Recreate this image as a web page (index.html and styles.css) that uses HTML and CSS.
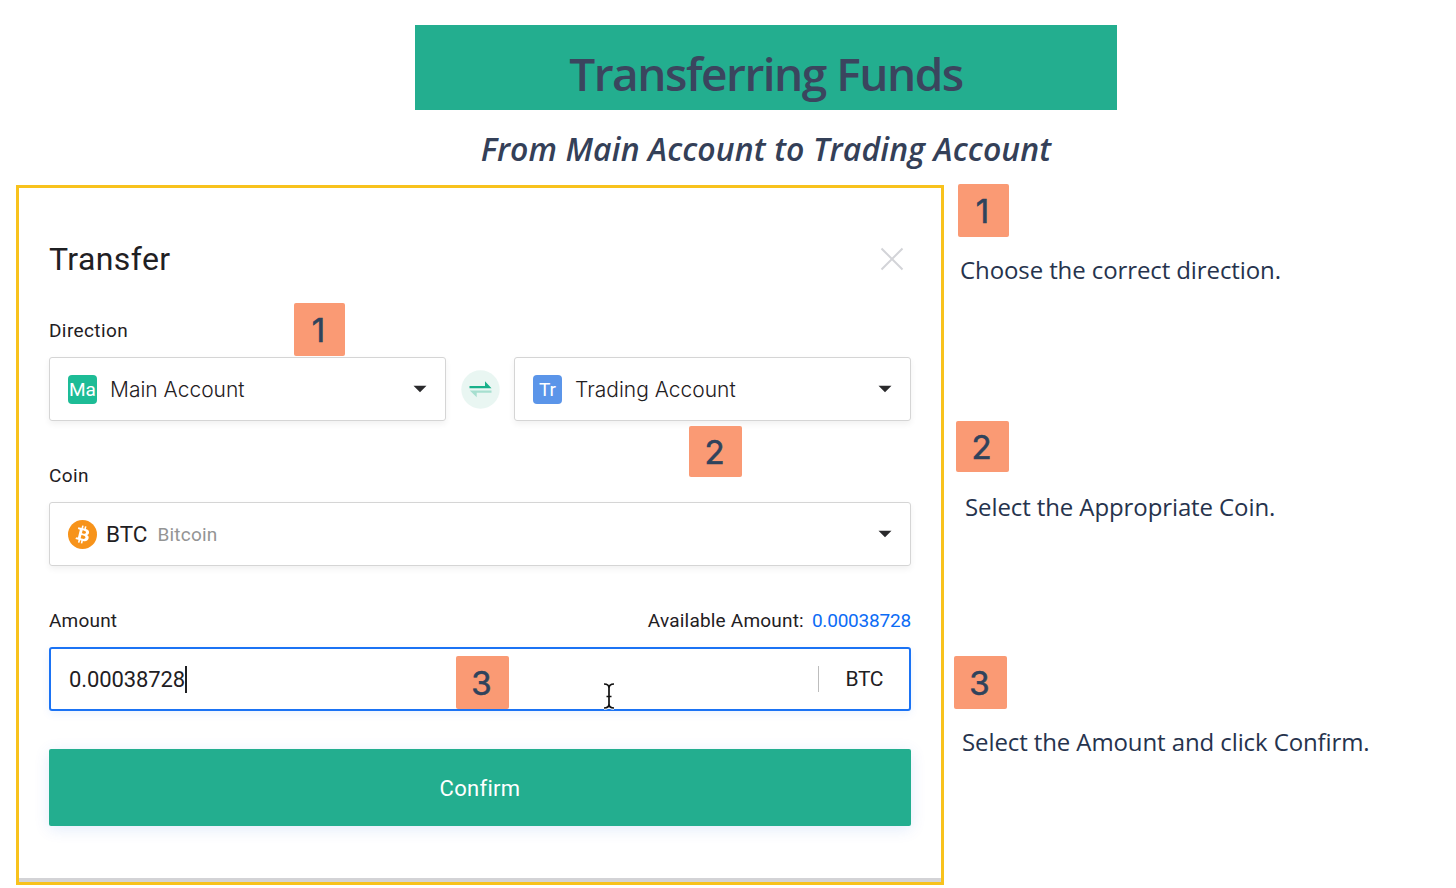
FILE: index.html
```html
<!DOCTYPE html>
<html lang="en">
  <head>
    <meta charset="UTF-8" />
    <meta name="viewport" content="width=device-width, initial-scale=1.0" />
    <title>Transferring Funds</title>
    <link rel="stylesheet" href="styles.css">
  </head>
  <body>
    <header class="page-header">
      <h1 class="banner">Transferring Funds</h1>
      <h2 class="subtitle">From Main Account to Trading Account</h2>
    </header>

    <main class="content">
      <!-- Transfer Form -->
      <form class="panel">
        <div class="panel-head">
          <h3 class="panel-title">Transfer</h3>
          <svg class="close" viewBox="0 0 24 24">
            <path d="M1.5 1.5 22.5 22.5M22.5 1.5 1.5 22.5" />
          </svg>
        </div>

        <div class="label-row"><span class="label-wide">Direction</span></div>
        <div class="direction">
          <div class="field">
            <span class="tag tag-main">Ma</span>
            <span class="account">Main Account</span>
            <svg class="caret" viewBox="0 0 14 8"><path d="M0.5 0.7H13.5L7 7.3Z" /></svg>
          </div>
          <svg class="swap" viewBox="0 0 39 39">
            <circle cx="19.5" cy="19.5" r="19.2" fill="#e9f6f2" />
            <path d="M8.5 16H24V11.3L30.5 18.3H8.5Z" fill="#18b08a" />
            <path d="M30.5 20.5H8.8L15.7 27.2V22.7H30.5Z" fill="#a6dfcf" />
          </svg>
          <div class="field">
            <span class="tag tag-trade">Tr</span>
            <span class="account">Trading Account</span>
            <svg class="caret" viewBox="0 0 14 8"><path d="M0.5 0.7H13.5L7 7.3Z" /></svg>
          </div>
        </div>

        <div class="label-row"><span class="label-wide">Coin</span></div>
        <div class="field">
          <svg class="coin-icon" viewBox="0 0 32 32">
            <circle cx="16" cy="16" r="16" fill="#f7931a" />
            <path fill="#fff" d="M23.189 14.02c.314-2.096-1.283-3.223-3.465-3.975l.708-2.84-1.728-.43-.69 2.765c-.454-.114-.92-.22-1.385-.326l.695-2.783L15.596 6l-.708 2.839c-.376-.086-.746-.17-1.104-.26l.002-.009-2.384-.595-.46 1.846s1.283.294 1.256.312c.7.175.826.638.805 1.006l-.806 3.235c.048.012.11.03.18.057l-.183-.045-1.13 4.532c-.086.212-.303.531-.793.41.018.025-1.256-.313-1.256-.313l-.858 1.978 2.25.561c.418.105.828.215 1.231.318l-.715 2.872 1.727.43.708-2.84c.472.127.93.245 1.378.357l-.706 2.828 1.728.43.715-2.866c2.948.558 5.164.333 6.097-2.333.752-2.146-.037-3.385-1.588-4.192 1.13-.26 1.98-1.003 2.207-2.538zm-3.95 5.538c-.533 2.147-4.148.986-5.32.695l.95-3.805c1.172.293 4.929.872 4.37 3.11zm.535-5.569c-.487 1.953-3.495.96-4.47.717l.86-3.45c.975.243 4.118.696 3.61 2.733z" />
          </svg>
          <span class="coin-code">BTC</span>
          <span class="coin-name">Bitcoin</span>
          <svg class="caret" viewBox="0 0 14 8"><path d="M0.5 0.7H13.5L7 7.3Z" /></svg>
        </div>

        <div class="label-row">
          <span>Amount</span>
          <span class="available">
            <span>Available Amount:</span>
            <span class="available-value">0.00038728</span>
          </span>
        </div>
        <div class="field field-active">
          <span class="amount">0.00038728</span>
          <span class="text-caret"></span>
          <span class="unit">BTC</span>
        </div>

        <button class="confirm" type="button">Confirm</button>

        <!-- Step markers over the form -->
        <span class="badge marker marker-1">1</span>
        <span class="badge badge-wide marker marker-2">2</span>
        <span class="badge badge-square marker marker-3">3</span>
        <svg class="cursor" viewBox="0 0 14 28">
          <path class="cursor-halo" d="M2 2Q7 2 7 6Q7 2 12 2M7 5V23M2 26Q7 26 7 22Q7 26 12 26M4.5 14.5H9.5" />
          <path d="M2 2Q7 2 7 6Q7 2 12 2M7 5V23M2 26Q7 26 7 22Q7 26 12 26M4.5 14.5H9.5" />
        </svg>
      </form>

      <!-- Instructions -->
      <div class="steps">
        <section class="step step-1">
          <span class="badge">1</span>
          <p class="step-text">Choose the correct direction.</p>
        </section>
        <section class="step step-2">
          <span class="badge badge-wide">2</span>
          <p class="step-text">Select the Appropriate Coin.</p>
        </section>
        <section class="step step-3">
          <span class="badge badge-square">3</span>
          <p class="step-text">Select the Amount and click Confirm.</p>
        </section>
      </div>
    </main>
  </body>
</html>
```
FILE: styles.css
```css
* {
  box-sizing: border-box;
}
body {
  margin: 0;
  height: 888px;
  overflow: hidden;
  background-color: #fff;
  color: #1f2023;
  font-family: Roboto, sans-serif;
}
h1,
h2,
h3,
p {
  margin: 0;
}
.page-header {
  width: 702px;
  height: 185px;
  margin-left: 415px;
  padding-top: 25px;
  text-align: center;
  color: #344058;
  font-family: "Trebuchet MS", "Open Sans", sans-serif;
  white-space: nowrap;
}
.banner {
  height: 85px;
  padding-top: 6px;
  background-color: #23ae8f;
  color: #3b455e;
  font-size: 46px;
  font-weight: 600;
  line-height: 85px;
  letter-spacing: -1.5px;
}
.subtitle {
  padding-top: 19px;
  font-size: 32px;
  font-style: italic;
  font-weight: 600;
  line-height: 40px;
  letter-spacing: 0.1px;
}
.content {
  display: flex;
  padding-left: 16px;
}

/* Form */
.panel {
  position: relative;
  width: 928px;
  height: 700px;
  padding: 53px 30px 0;
  border: 3px solid #f8c21c;
  box-shadow: inset 0 -4px 0 #d3d3d6;
}
.panel-head {
  display: flex;
  justify-content: space-between;
  align-items: center;
  height: 36px;
  margin-bottom: -1px;
  padding-right: 7px;
}
.panel-title {
  font-size: 32px;
  font-weight: 400;
  letter-spacing: 0.4px;
}
.close {
  width: 24px;
  height: 24px;
  fill: none;
  stroke: #d3d4d8;
  stroke-width: 2;
}
.label-row {
  display: flex;
  justify-content: space-between;
  height: 24px;
  margin: 43px 0 14px;
  font-size: 19px;
  line-height: 24px;
  letter-spacing: 0.2px;
}
.label-wide {
  letter-spacing: 0.4px;
}
.direction {
  display: grid;
  grid-template-columns: 397px 39px 397px;
  justify-content: space-between;
  align-items: center;
}
.field {
  display: flex;
  align-items: center;
  height: 64px;
  padding: 0 18px;
  border: 1px solid #d5d5d5;
  border-radius: 3px;
  box-shadow: 0 3px 6px rgba(0, 0, 0, 0.06);
}
.tag {
  width: 29px;
  height: 29px;
  overflow: hidden;
  border-radius: 4px;
  color: #fff;
  font-size: 19px;
  line-height: 29px;
  text-align: center;
}
.tag-main {
  background-color: #1dbc96;
}
.tag-trade {
  background-color: #5b95e9;
}
.account {
  margin-left: 13px;
  font-family: Inter, sans-serif;
  font-size: 21px;
  font-weight: 300;
}
.caret {
  width: 14px;
  height: 8px;
  margin-left: auto;
  fill: #2a2a2c;
}
.swap {
  width: 39px;
  height: 39px;
}
.coin-icon {
  width: 29px;
  height: 29px;
}
.coin-code {
  margin-left: 9px;
  font-size: 22.5px;
}
.coin-name {
  margin-left: 10px;
  color: #949494;
  font-size: 19px;
  letter-spacing: 0.2px;
}
.available {
  display: flex;
  gap: 8px;
}
.available-value {
  color: #0c6cf5;
  letter-spacing: -0.2px;
}
.field-active {
  padding: 0 26px 0 18px;
  border: 2px solid #1b73f4;
  box-shadow: 0 3px 8px rgba(12, 108, 245, 0.08);
}
.amount {
  font-size: 22px;
  letter-spacing: -0.1px;
}
.text-caret {
  width: 2px;
  height: 27px;
  background-color: #1f2023;
}
.unit {
  margin-left: auto;
  padding-left: 26px;
  border-left: 1px solid #bdbdbd;
  font-size: 21px;
  line-height: 26px;
  letter-spacing: -0.4px;
}
.confirm {
  display: block;
  width: 100%;
  height: 77px;
  margin-top: 38px;
  padding-top: 3px;
  border: 0;
  border-radius: 2px;
  background-color: #23ae8f;
  box-shadow: 0 3px 16px rgba(12, 90, 220, 0.12);
  color: #fff;
  font-family: inherit;
  font-size: 22px;
  letter-spacing: 0.3px;
}

/* Number badges */
.badge {
  display: block;
  width: 51px;
  height: 53px;
  padding-right: 2px;
  border-radius: 2px;
  background-color: #fa9a74;
  color: #2f435c;
  font-family: Inter, Arial, sans-serif;
  font-size: 33px;
  line-height: 55px;
  text-align: center;
  -webkit-text-stroke: 0.6px #2f435c;
}
.badge-wide {
  width: 53px;
  height: 51px;
  line-height: 53px;
}
.badge-square {
  width: 53px;
}
.marker {
  position: absolute;
}
.marker-1 {
  left: 275px;
  top: 115px;
}
.marker-2 {
  left: 670px;
  top: 238px;
}
.marker-3 {
  left: 437px;
  top: 468px;
}
.cursor {
  position: absolute;
  left: 583px;
  top: 494px;
  width: 14px;
  height: 28px;
  fill: none;
  stroke: #111;
  stroke-width: 1.7;
}
.cursor-halo {
  stroke: #fff;
  stroke-width: 3.5;
}

/* Instructions */
.steps {
  margin-top: -1px;
  color: #26334d;
  font-family: "Trebuchet MS", "Open Sans", sans-serif;
}
.step {
  height: 235px;
  padding-left: 12px;
}
.step-1 {
  height: 237px;
  padding-left: 14px;
}
.step-3 {
  padding-left: 10px;
}
.step-text {
  margin: 17px 0 0 2px;
  font-size: 24px;
  font-weight: 500;
  line-height: 32px;
  letter-spacing: -0.1px;
  white-space: nowrap;
}
.step-2 .step-text {
  margin: 19px 0 0 9px;
}
.step-3 .step-text {
  margin-left: 8px;
}
```
